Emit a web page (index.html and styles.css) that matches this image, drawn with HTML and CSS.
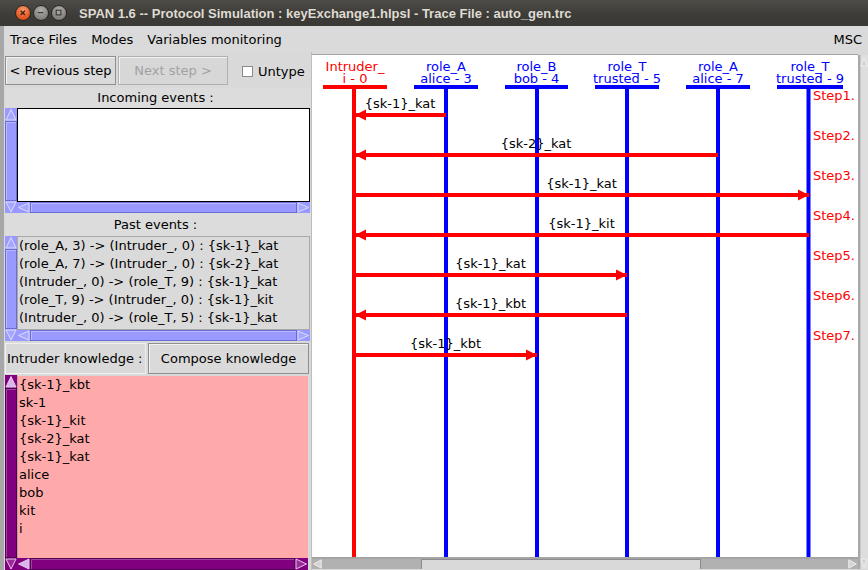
FILE: index.html
```html
<!DOCTYPE html>
<html>
<head>
<meta charset="utf-8">
<title>SPAN 1.6</title>
<link rel="stylesheet" href="styles.css">
</head>
<body>
<div class="window">
  <header class="titlebar">
    <div class="wm-buttons">
      <span class="wm close"><svg viewBox="0 0 16 16"><path d="M5.3 5.3 L10.2 10.2 M10.2 5.3 L5.3 10.2"/></svg></span>
      <span class="wm min"><svg viewBox="0 0 16 16"><path d="M4.3 7.5 H10.7"/></svg></span>
      <span class="wm max"><svg viewBox="0 0 16 16"><rect x="4.8" y="4.8" width="5.4" height="5.4"/></svg></span>
    </div>
    <div class="title">SPAN 1.6 -- Protocol Simulation : keyExchange1.hlpsl - Trace File : auto_gen.trc</div>
  </header>

  <div class="frame">
    <nav class="menubar">
      <span class="menu">Trace Files</span>
      <span class="menu">Modes</span>
      <span class="menu">Variables monitoring</span>
      <span class="spacer"></span>
      <span class="menu last">MSC</span>
    </nav>

    <div class="main">
      <aside class="left">
        <div class="toolbar">
          <button class="btn prev">&lt; Previous step</button>
          <button class="btn disabled">Next step &gt;</button>
          <label class="check"><span class="cb"></span>Untype</label>
        </div>

        <div class="pane-title t1">Incoming events :</div>
        <div class="pane p1">
          <div class="vbar blue">
            <svg class="arr" viewBox="0 0 12 13"><path d="M1 12 L6 1.5 L11 12 Z"/></svg>
            <div class="thumb"></div>
            <svg class="arr" viewBox="0 0 12 12"><path d="M1 1 L6 11 L11 1 Z"/></svg>
          </div>
          <div class="list white"></div>
          <div class="hbar blue">
            <svg class="arr h" viewBox="0 0 13 11"><path d="M12 1 L1.5 5.5 L12 10 Z"/></svg>
            <div class="thumb"></div>
            <svg class="arr h" viewBox="0 0 13 11"><path d="M1 1 L11.5 5.5 L1 10 Z"/></svg>
          </div>
        </div>

        <div class="pane-title t2">Past events :</div>
        <div class="pane p2">
          <div class="vbar blue">
            <svg class="arr" viewBox="0 0 12 13"><path d="M1 12 L6 1.5 L11 12 Z"/></svg>
            <div class="thumb"></div>
            <svg class="arr" viewBox="0 0 12 12"><path d="M1 1 L6 11 L11 1 Z"/></svg>
          </div>
          <div class="list grayl">
            <div>(role_A, 3) -&gt; (Intruder_, 0) : {sk-1}_kat</div>
            <div>(role_A, 7) -&gt; (Intruder_, 0) : {sk-2}_kat</div>
            <div>(Intruder_, 0) -&gt; (role_T, 9) : {sk-1}_kat</div>
            <div>(role_T, 9) -&gt; (Intruder_, 0) : {sk-1}_kit</div>
            <div>(Intruder_, 0) -&gt; (role_T, 5) : {sk-1}_kat</div>
          </div>
          <div class="hbar blue">
            <svg class="arr h" viewBox="0 0 13 11"><path d="M12 1 L1.5 5.5 L12 10 Z"/></svg>
            <div class="thumb"></div>
            <svg class="arr h" viewBox="0 0 13 11"><path d="M1 1 L11.5 5.5 L1 10 Z"/></svg>
          </div>
        </div>

        <div class="kn-row">
          <div class="kn-label">Intruder knowledge :</div>
          <button class="btn compose">Compose knowledge</button>
        </div>

        <div class="pane p3">
          <div class="vbar purple">
            <svg class="arr" viewBox="0 0 12 13"><path d="M1 12 L6 1.5 L11 12 Z"/></svg>
            <div class="thumb"></div>
            <svg class="arr" viewBox="0 0 12 12"><path d="M1 1 L6 11 L11 1 Z"/></svg>
          </div>
          <div class="list pink">
            <div>{sk-1}_kbt</div>
            <div>sk-1</div>
            <div>{sk-1}_kit</div>
            <div>{sk-2}_kat</div>
            <div>{sk-1}_kat</div>
            <div>alice</div>
            <div>bob</div>
            <div>kit</div>
            <div>i</div>
          </div>
          <div class="hbar purple">
            <svg class="arr h" viewBox="0 0 13 12"><path d="M12 1 L1.5 6 L12 11 Z"/></svg>
            <div class="thumb"></div>
            <svg class="arr h" viewBox="0 0 13 12"><path d="M1 1 L11.5 6 L1 11 Z"/></svg>
          </div>
        </div>
      </aside>

      <section class="msc">
        <div class="canvas">
          <svg class="diagram" viewBox="312 56 546 502" width="546" height="502">
            <!-- headers -->
            <g class="hdr red">
              <text x="355" y="72">Intruder_</text>
              <text x="355" y="84">i - 0</text>
            </g>
            <g class="hdr blue">
              <text x="446" y="72">role_A</text>
              <text x="446" y="84">alice - 3</text>
              <text x="536.5" y="72">role_B</text>
              <text x="536.5" y="84">bob - 4</text>
              <text x="627" y="72">role_T</text>
              <text x="627" y="84">trusted - 5</text>
              <text x="718" y="72">role_A</text>
              <text x="718" y="84">alice - 7</text>
              <text x="810" y="72">role_T</text>
              <text x="810" y="84">trusted - 9</text>
            </g>
            <!-- header bars -->
            <rect class="red" x="323" y="86" width="64" height="4"/>
            <rect class="blue" x="414" y="86" width="64" height="4"/>
            <rect class="blue" x="505" y="86" width="63" height="4"/>
            <rect class="blue" x="595" y="86" width="64" height="4"/>
            <rect class="blue" x="686" y="86" width="64" height="4"/>
            <rect class="blue" x="777" y="86" width="66" height="4"/>
            <!-- lifelines -->
            <rect class="red" x="352" y="88" width="4" height="470"/>
            <rect class="blue" x="444" y="88" width="4" height="470"/>
            <rect class="blue" x="535" y="88" width="4" height="470"/>
            <rect class="blue" x="625" y="88" width="4" height="470"/>
            <rect class="blue" x="716" y="88" width="4" height="470"/>
            <rect class="blue" x="806.5" y="88" width="4" height="470"/>
            <!-- messages -->
            <g class="red">
              <rect x="354" y="114" width="92" height="4"/>
              <polygon points="355,116 366,110.5 366,121.5"/>
              <rect x="354" y="154" width="364" height="4"/>
              <polygon points="355,156 366,150.5 366,161.5"/>
              <rect x="354" y="194" width="455" height="4"/>
              <polygon points="809,196 798,190.5 798,201.5"/>
              <rect x="354" y="234" width="455" height="4"/>
              <polygon points="355,236 366,230.5 366,241.5"/>
              <rect x="354" y="274" width="273" height="4"/>
              <polygon points="627,276 616,270.5 616,281.5"/>
              <rect x="354" y="314" width="273" height="4"/>
              <polygon points="355,316 366,310.5 366,321.5"/>
              <rect x="354" y="354" width="183" height="4"/>
              <polygon points="537,356 526,350.5 526,361.5"/>
            </g>
            <g class="msg">
              <text x="400" y="109">{sk-1}_kat</text>
              <text x="536" y="149">{sk-2}_kat</text>
              <text x="581.5" y="189">{sk-1}_kat</text>
              <text x="581.5" y="229">{sk-1}_kit</text>
              <text x="490.5" y="269">{sk-1}_kat</text>
              <text x="490.5" y="309">{sk-1}_kbt</text>
              <text x="445.5" y="349">{sk-1}_kbt</text>
            </g>
            <g class="step">
              <text x="813" y="101">Step1.</text>
              <text x="813" y="141">Step2.</text>
              <text x="813" y="181">Step3.</text>
              <text x="813" y="221">Step4.</text>
              <text x="813" y="261">Step5.</text>
              <text x="813" y="301">Step6.</text>
              <text x="813" y="341">Step7.</text>
            </g>
          </svg>
        </div>
        <div class="vbar gray msc-v">
          <svg class="arr" viewBox="0 0 10 13"><path d="M1 12 L5 1.5 L9 12 Z"/></svg>
          <div class="thumb"></div>
          <svg class="arr" viewBox="0 0 10 12"><path d="M1 1 L5 11 L9 1 Z"/></svg>
        </div>
        <div class="hbar gray msc-h">
          <svg class="arr h" viewBox="0 0 11 12"><path d="M10 1 L1 6 L10 11 Z"/></svg>
          <div class="track"><div class="thumb"></div></div>
          <svg class="arr h" viewBox="0 0 11 12"><path d="M1 1 L10 6 L1 11 Z"/></svg>
        </div>
      </section>
    </div>
  </div>
</div>
</body>
</html>
```

FILE: styles.css
```css
* { box-sizing: border-box; }

html, body {
  margin: 0;
  padding: 0;
}

body {
  width: 868px;
  height: 570px;
  overflow: hidden;
  font-family: "DejaVu Sans", "Noto Sans", sans-serif;
  font-size: 13px;
  color: #000;
  background: #d9d9d9;
}

.window {
  width: 868px;
  height: 570px;
  display: flex;
  flex-direction: column;
}

/* ---------- title bar ---------- */
.titlebar {
  height: 26px;
  flex: none;
  display: flex;
  align-items: center;
  background: linear-gradient(#4d4c47, #3c3b37 60%, #3a3935);
}

.wm-buttons {
  display: flex;
  gap: 2px;
  padding-left: 15px;
}

.wm {
  width: 16px;
  height: 16px;
  border-radius: 50%;
  border: 1px solid #2b2a27;
  display: block;
}

.wm svg {
  display: block;
  width: 14px;
  height: 14px;
}

.wm path, .wm rect {
  fill: none;
  stroke-width: 1.6;
}

.close {
  background: radial-gradient(circle at 50% 30%, #f79a72, #e4561f 65%, #c8420f);
}
.close path { stroke: #4e1f0e; }

.min, .max {
  background: radial-gradient(circle at 50% 30%, #b0afa9, #85847e 65%, #6d6c67);
}
.min path, .max rect { stroke: #3a3935; stroke-width: 1.3; }

.title {
  margin-left: 12px;
  font-family: "Liberation Sans", Arial, sans-serif;
  font-weight: bold;
  font-size: 13px;
  color: #dfdbd2;
  white-space: nowrap;
}

/* ---------- frame ---------- */
.frame {
  flex: 1;
  display: flex;
  flex-direction: column;
  border-left: 4px solid #a7a7a7;
  background: #d9d9d9;
}

.menubar {
  height: 26px;
  flex: none;
  display: flex;
  align-items: center;
  padding-top: 1px;
  background: #dadada;
}

.menu {
  padding: 0 7px;
  white-space: nowrap;
}

.menu:first-child { padding-left: 6px; }
.menu.last { padding-right: 6px; }

.spacer { flex: 1; }

.main {
  flex: 1;
  display: flex;
  min-height: 0;
}

/* ---------- left panel ---------- */
.left {
  width: 307px;
  flex: none;
  padding: 0 0 0 1px;
  display: flex;
  flex-direction: column;
  background: #d9d9d9;
}

.toolbar {
  height: 36px;
  flex: none;
  padding: 4px 0 3px;
  display: flex;
  align-items: stretch;
  gap: 2px;
}

.btn {
  font-family: "DejaVu Sans", "Noto Sans", sans-serif;
  font-size: 13px;
  color: #000;
  background: #dadada;
  border: 1px solid #8f8f8f;
  box-shadow: inset 1px 1px 0 #f2f2f2;
  padding: 0;
  margin: 0;
}

.prev { width: 111px; }

.disabled {
  width: 110px;
  color: #a2a2a2;
  background: #d7d7d7;
  border-color: #b0b0b0;
}

.check {
  display: flex;
  align-items: center;
  margin-left: 12px;
  gap: 5px;
  padding-top: 1px;
}

.cb {
  width: 11px;
  height: 11px;
  background: #fff;
  border: 1px solid #8a8a8a;
}

.pane-title {
  flex: none;
  text-align: center;
  padding-right: 5px;
  background: #dcdcdc;
}

.t1 { height: 20px; line-height: 20px; }
.t2 { height: 23px; line-height: 23px; }

.pane {
  flex: none;
  display: grid;
  grid-template-columns: 12px 1fr;
  grid-template-rows: 1fr 11px;
  margin-right: 1px;
}

.p1, .p2 { height: 105px; }
.p3 { height: 195px; grid-template-rows: 1fr 12px; margin-right: 3px; }

.pane .vbar { grid-row: 1 / 3; }

.list {
  overflow: hidden;
  white-space: nowrap;
  line-height: 18px;
  padding-left: 1px;
}

.white {
  background: #fff;
  border: 1px solid #000;
}

.grayl {
  background: #dadada;
  border: 1px solid #a9a9a9;
}

.pink {
  background: #ffaaaa;
  border-top: 1px solid #d8d8d8;
  border-left: 1px solid #c89a9a;
  padding-left: 1px;
}

.kn-row {
  flex: none;
  height: 31px;
  margin: 2px 2px 1px 0;
  display: flex;
  gap: 2px;
}

.kn-label {
  width: 141px;
  border: 1px solid #efefef;
  line-height: 29px;
  padding-left: 1px;
  white-space: nowrap;
}

.compose { flex: 1; }

/* ---------- scrollbars ---------- */
.vbar {
  display: flex;
  flex-direction: column;
}

.vbar .arr {
  display: block;
  width: 100%;
  height: 12px;
  flex: none;
}

.vbar .arr:first-child { height: 13px; }

.hbar {
  display: flex;
}

.hbar .arr {
  display: block;
  width: 13px;
  height: 100%;
  flex: none;
}

.thumb { flex: 1; }

.arr path { stroke-width: 1; }

.blue { background: #9999ff; }
.blue .thumb {
  border: 1px solid #6b6bd6;
  box-shadow: inset 1px 1px 0 #b9b9ff;
}
.blue .arr path { fill: #a6a6ff; stroke: #dcdcff; }

.purple { background: #800080; }
.purple .thumb {
  border: 1px solid #520052;
  box-shadow: inset 1px 1px 0 #a040a0;
}
.purple .arr path { fill: #9b2b9b; stroke: #e6c6e6; }
.purple .arr:first-child path { fill: #d8b8e8; }

/* ---------- MSC ---------- */
.msc {
  flex: 1;
  padding-top: 3px;
  display: grid;
  grid-template-columns: 546px 10px;
  grid-template-rows: 502px 12px;
  border-left: 1px solid #bdbdbd;
}

.canvas {
  border-top: 1px solid #a3a3a3;
  background: #fff;
  width: 546px;
  height: 503px;
  margin-top: -1px;
}

.diagram {
  display: block;
}

.diagram text {
  font-family: "DejaVu Sans", "Noto Sans", sans-serif;
  font-size: 13px;
}

.diagram .red, .diagram .red text { fill: #ff0000; }
.diagram .blue, .diagram .blue text { fill: #0000ff; }
.hdr text { text-anchor: middle; }
.msg text { text-anchor: middle; fill: #000; }
.step text { fill: #ff0000; }

.msc-v {
  grid-column: 2;
  grid-row: 1 / 3;
  background: #dedede;
  border-left: 2px solid #a9a9a9;
  box-shadow: inset 1px 0 0 #c8c8c8;
}

.msc-v .arr { height: 12px; }

.gray .arr path { fill: #d4d4d4; stroke: #f4f4f4; }

.msc-h {
  grid-column: 1;
  grid-row: 2;
  background: #b1b1b1;
  border-top: 2px solid #a4a4a4;
}

.msc-h .arr { width: 11px; }

.track {
  flex: 1;
  display: flex;
}

.track .thumb {
  flex: none;
  margin-left: 98px;
  width: 280px;
  background: #d9d9d9;
  border: 1px solid #8c8c8c;
  border-bottom: none;
}
```
